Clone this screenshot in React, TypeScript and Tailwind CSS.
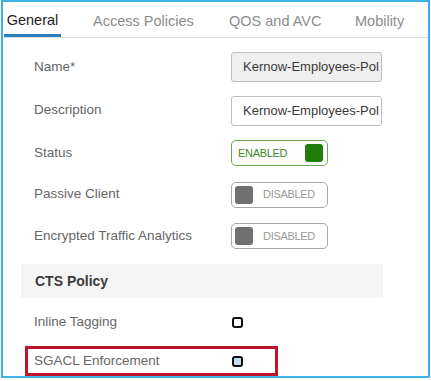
import React from "react";

const font = { fontFamily: '"Liberation Sans", Arial, sans-serif' };

function Field({ value, disabled }: { value: string; disabled?: boolean }) {
  return (
    <div
      className={`w-[151px] h-[30px] rounded-[3px] border border-[#bdbdbd] flex items-center pl-[11px] overflow-hidden whitespace-nowrap text-[13px] text-[#3a3a3a] ${
        disabled ? "bg-[#efefef]" : "bg-white"
      }`}
    >
      {value}
    </div>
  );
}

function Enabled() {
  return (
    <div className="w-[97px] h-[26px] rounded-[5px] border border-[#6aa84f] flex items-center justify-between pl-[6px] pr-[4px]">
      <span className="text-[11px] tracking-[-0.3px] text-[#3b8a1f]">ENABLED</span>
      <span className="w-[18px] h-[18px] rounded-[3px] bg-[#1f7d0a]" />
    </div>
  );
}

function Disabled() {
  return (
    <div className="w-[97px] h-[26px] rounded-[5px] border border-[#a8a8a8] flex items-center pl-[3px] gap-[10px]">
      <span className="w-[18px] h-[18px] rounded-[3px] bg-[#707070]" />
      <span className="text-[11px] tracking-[-0.3px] text-[#9a9a9a]">DISABLED</span>
    </div>
  );
}

function Check({ fill }: { fill?: boolean }) {
  return (
    <div
      className={`w-[11px] h-[11px] rounded-[3px] border-2 border-[#111] ${
        fill ? "bg-[#bfe0f0]" : "bg-white"
      }`}
    />
  );
}

function Row({
  label,
  h,
  children,
}: {
  label: string;
  h: string;
  children: React.ReactNode;
}) {
  return (
    <div className={`flex items-center ${h}`}>
      <div className="w-[228px] pl-[31px] text-[13.5px] text-[#666]">{label}</div>
      {children}
    </div>
  );
}

export default function App() {
  return (
    <div className="w-[431px] h-[381px] bg-white" style={font}>
      <div className="ml-[1px] w-[429px] h-[378px] border-2 border-[#3ab2e3] flex flex-col overflow-hidden">
        {/* Tabs */}
        <div className="flex h-[36px] border-b border-[#dedede] shrink-0 text-[14.5px]">
          <div className="ml-[1px] w-[57px] h-full flex items-center justify-center text-[#222] border-b-[3px] border-[#2b7fbf] pt-[5px]">
            General
          </div>
          <div className="ml-[32px] w-[136px] h-full flex items-center pt-[4px] text-[#8c8c8c]">
            Access Policies
          </div>
          <div className="w-[126px] h-full flex items-center pt-[4px] text-[#8c8c8c]">
            QOS and AVC
          </div>
          <div className="h-full flex items-center pt-[4px] text-[#8c8c8c]">
            Mobility
          </div>
        </div>

        <div className="flex flex-col pt-[7px]">
          <Row label="Name*" h="h-[44px]">
            <Field value="Kernow-Employees-Pol" disabled />
          </Row>
          <Row label="Description" h="h-[43px]">
            <Field value="Kernow-Employees-Pol" />
          </Row>
          <Row label="Status" h="h-[42px]">
            <Enabled />
          </Row>
          <Row label="Passive Client" h="h-[41px]">
            <Disabled />
          </Row>
          <Row label="Encrypted Traffic Analytics" h="h-[42px]">
            <Disabled />
          </Row>

          <div className="mt-[7px] ml-[18px] w-[362px] h-[34px] bg-[#f5f5f5] flex items-center pl-[14px] text-[14px] font-bold text-[#3a3a3a]">
            CTS Policy
          </div>

          <div className="flex items-center h-[48px] pt-[1px]">
            <div className="w-[229px] pl-[31px] text-[13.5px] text-[#666]">Inline Tagging</div>
            <Check />
          </div>

          <div className="ml-[22px] w-[253px] h-[30px] border-[3px] border-[#c01428] flex items-center">
            <div className="w-[204px] pl-[6px] text-[13.5px] text-[#666]">SGACL Enforcement</div>
            <Check fill />
          </div>
        </div>
      </div>
    </div>
  );
}
